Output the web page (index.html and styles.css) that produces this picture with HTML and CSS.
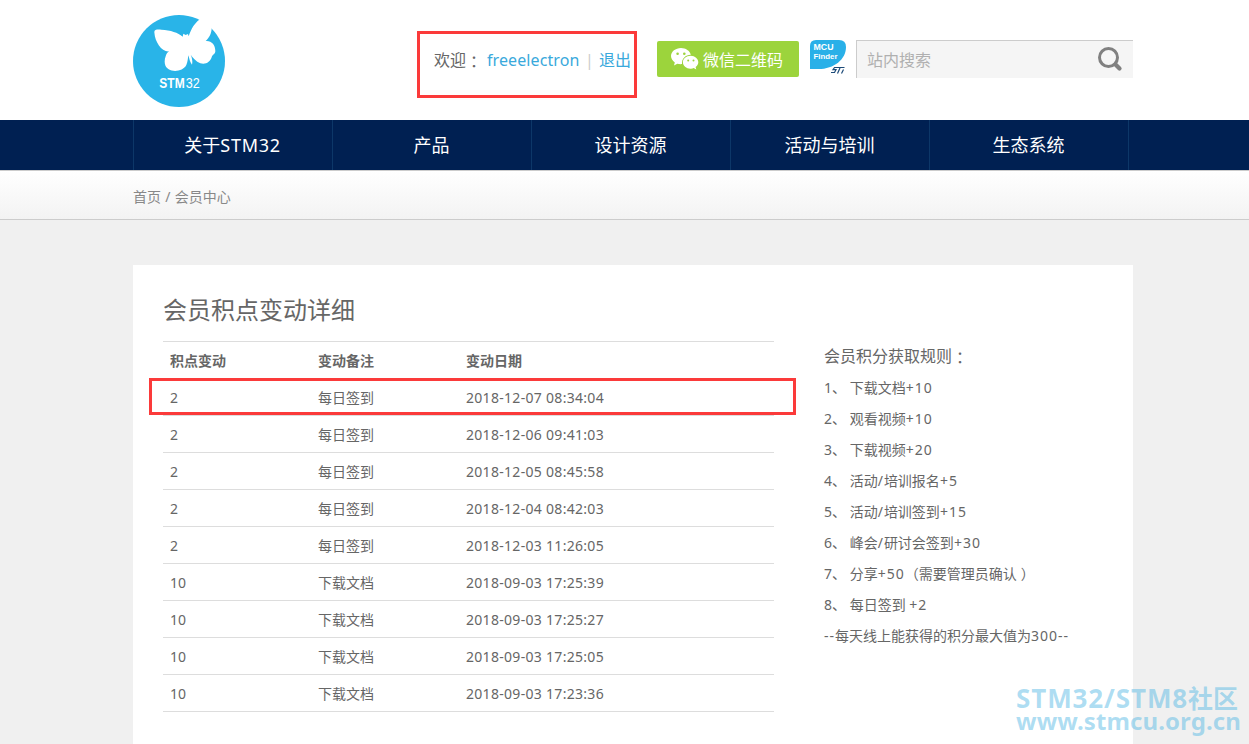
FILE: index.html
```html
<!DOCTYPE html>
<html lang="zh-CN">
<head>
    <meta charset="UTF-8">
    <title>会员中心</title>
    <link rel="stylesheet" href="styles.css">
</head>
<body>
    <header class="wrap header">
        <svg class="logo" viewBox="39 30 276 276">
            <circle cx="177" cy="168" r="138" fill="#29b4e8"/>
            <path fill="#fff" d="M103 82C102 74 110 73 124 74C152 76 174 82 188 95L190 86L197 90L204 87L206 94C214 70 224 54 238 44L262 20L290 62L275 68C275 84 268 98 257 108C274 106 286 119 286 138C286 147 279 148 276 154C271 172 256 180 241 175C228 170 219 158 212 149C217 160 218 170 216 179C210 172 207 161 206 151C203 159 204 169 199 180C190 198 162 202 146 193C132 184 132 166 137 154C139 146 143 141 148 139C126 142 105 113 103 82Z"/>
            <text class="logo-bold" x="118" y="249" textLength="76" lengthAdjust="spacingAndGlyphs">STM</text>
            <text class="logo-thin" x="197" y="249" textLength="42" lengthAdjust="spacingAndGlyphs">32</text>
        </svg>
        <div class="welcome">
            <span class="hello">欢迎<span class="mid" lang="zh-TW">：</span></span>
            <a href="#" class="user">freeelectron</a>
            <span class="bar">|</span>
            <a href="#">退出</a>
        </div>
        <a href="#" class="wechat">
            <svg width="28" height="22" viewBox="0 0 28 22">
                <path fill="#fff" d="M10 0C4.500 0 0 3.600 0 8.100C0 10.700 1.500 12.900 3.800 14.400L3 17.400L6.300 15.700C7.800 16.100 9.500 16.300 11 16.100C10.600 10.500 14.500 6.900 19.800 6.700C18.900 2.800 14.700 0 10 0Z"/>
                <path fill="#fff" d="M19.700 7.800C15 7.800 11.900 10.900 11.900 14.300C11.900 18 15.600 21 20 20.700C21 20.600 21.900 20.400 22.700 20.100L25.300 21.400L24.600 19C26.400 17.700 27.300 16.200 27.300 14.300C27.300 10.900 23.900 7.800 19.700 7.800Z"/>
                <g fill="#9cd43c">
                    <circle cx="6.600" cy="5.800" r="1.300"/>
                    <circle cx="13.300" cy="5.800" r="1.300"/>
                    <circle cx="17.200" cy="12.500" r="1"/>
                    <circle cx="22.500" cy="12.500" r="1"/>
                </g>
            </svg>
            <span>微信二维码</span>
        </a>
        <svg class="mcu" width="36" height="35" viewBox="0 0 36 35">
            <path fill="#29b0e8" d="M6 0H29Q36 0 36 7C36 20 23 30 6 29H0V6Q0 0 6 0Z"/>
            <text x="3.500" y="10" font-size="8.500" textLength="20" lengthAdjust="spacingAndGlyphs">MCU</text>
            <text x="3.500" y="19" font-size="7.500" textLength="24" lengthAdjust="spacingAndGlyphs">Finder</text>
            <path fill="none" stroke="#1c4a78" stroke-width="1.200" d="M34.500 27.500H24.500L23 29.700H26L24.500 32.500H21M30 28L27.500 33.500M33.500 29.500L31.500 33.500"/>
        </svg>
        <div class="search">
            <span>站内搜索</span>
            <svg width="26" height="26" viewBox="0 0 26 26" fill="none" stroke="#808080">
                <circle cx="11.500" cy="11.500" r="9" stroke-width="3"/>
                <path d="M18.500 18.500L22.500 22.500" stroke-width="4.200" stroke-linecap="round"/>
            </svg>
        </div>
    </header>

    <nav class="nav">
        <ul class="wrap">
            <li>关于<span class="latin">STM32</span></li>
            <li>产品</li>
            <li>设计资源</li>
            <li>活动与培训</li>
            <li>生态系统</li>
        </ul>
    </nav>

    <div class="crumb">
        <div class="wrap">首页 / 会员中心</div>
    </div>

    <main class="wrap panel">
        <h1>会员积点变动详细</h1>
        <div class="columns">
            <table>
                <tr><th>积点变动</th><th>变动备注</th><th>变动日期</th></tr>
                <tr><td class="marked">2</td><td>每日签到</td><td class="date">2018-12-07 08:34:04</td></tr>
                <tr><td>2</td><td>每日签到</td><td class="date">2018-12-06 09:41:03</td></tr>
                <tr><td>2</td><td>每日签到</td><td class="date">2018-12-05 08:45:58</td></tr>
                <tr><td>2</td><td>每日签到</td><td class="date">2018-12-04 08:42:03</td></tr>
                <tr><td>2</td><td>每日签到</td><td class="date">2018-12-03 11:26:05</td></tr>
                <tr><td>10</td><td>下载文档</td><td class="date">2018-09-03 17:25:39</td></tr>
                <tr><td>10</td><td>下载文档</td><td class="date">2018-09-03 17:25:27</td></tr>
                <tr><td>10</td><td>下载文档</td><td class="date">2018-09-03 17:25:05</td></tr>
                <tr><td>10</td><td>下载文档</td><td class="date">2018-09-03 17:23:36</td></tr>
            </table>
            <div class="rules">
                <h2>会员积分获取规则<span class="mid" lang="zh-TW">：</span></h2>
                <p>1、 下载文档<span class="num">+10</span></p>
                <p>2、 观看视频<span class="num">+10</span></p>
                <p>3、 下载视频<span class="num">+20</span></p>
                <p>4、 活动<span class="num">/</span>培训报名<span class="num">+5</span></p>
                <p>5、 活动<span class="num">/</span>培训签到<span class="num">+15</span></p>
                <p>6、 峰会<span class="num">/</span>研讨会签到<span class="num">+30</span></p>
                <p>7、 分享<span class="num">+50</span>（需要管理员确认<span class="close">）</span></p>
                <p>8、 每日签到 <span class="num">+2</span></p>
                <p><span class="num">--</span>每天线上能获得的积分最大值为<span class="num">300--</span></p>
            </div>
        </div>
    </main>

    <div class="watermark">
        <div class="mark-name"><span>STM32/STM8</span>社区</div>
        <div class="mark-url">www.stmcu.org.cn</div>
    </div>
</body>
</html>
```
FILE: styles.css
```css
* {
    box-sizing: border-box;
}

body {
    margin: 0;
    height: 744px;
    overflow: hidden;
    position: relative;
    background: #f0f0f0;
    color: #666;
    font-family: "Noto Sans", "Noto Sans CJK SC", sans-serif;
    font-size: 14px;
}

a {
    color: #39a9dc;
    text-decoration: none;
}

.wrap {
    width: 1000px;
    margin: 0 0 0 133px;
}

/* fullwidth colon centred in its box */
.mid {
    font-family: "Noto Sans CJK TC", sans-serif;
    line-height: 1;
    vertical-align: -2px;
}

/* header */
body::before {
    content: "";
    position: absolute;
    z-index: -1;
    top: 0;
    left: 0;
    right: 0;
    height: 120px;
    background: #fff;
}

.header {
    display: flex;
    align-items: flex-start;
    height: 120px;
}

.logo {
    width: 92px;
    height: 92px;
    margin-top: 15px;
}

.logo text {
    fill: #fff;
    font-family: "Liberation Sans", sans-serif;
    font-size: 45px;
}

.logo .logo-bold {
    font-weight: bold;
}

.welcome {
    display: flex;
    width: 220px;
    height: 67px;
    margin: 31px 0 0 192px;
    padding-left: 14px;
    border: 3px solid #fb3a3a;
    font-size: 16px;
    line-height: 52px;
    white-space: nowrap;
}

.hello {
    width: 53px;
}

.user {
    width: 93px;
    letter-spacing: 0.1px;
}

.bar {
    width: 19px;
    text-align: center;
    color: #ccc;
}

.wechat {
    display: flex;
    align-items: center;
    gap: 4px;
    width: 142px;
    height: 36px;
    margin: 41px 0 0 20px;
    padding: 0 0 1px 14px;
    border-radius: 2px;
    background: #9cd43c;
    color: #fff;
    font-size: 16px;
}

.mcu {
    margin: 40px 0 0 11px;
}

.mcu text {
    fill: #fff;
    font-family: "Liberation Sans", sans-serif;
    font-weight: bold;
}

.search {
    display: flex;
    align-items: center;
    justify-content: space-between;
    width: 277px;
    height: 38px;
    margin: 40px 0 0 10px;
    padding: 0 10px 1px;
    border-top: 1px solid #ccc;
    border-left: 1px solid #ccc;
    background: #f5f5f5;
    color: #b0b0b0;
    font-size: 16px;
}

/* navigation */
.nav {
    height: 50px;
    background: #002052;
}

.nav ul {
    display: flex;
    padding: 0;
    list-style: none;
}

.nav li {
    width: 199px;
    height: 50px;
    padding-right: 1px;
    border-left: 1px solid #0d3768;
    color: #fff;
    font-size: 18px;
    line-height: 50px;
    text-align: center;
}

.nav li:last-child {
    width: 200px;
    border-right: 1px solid #0d3768;
}

.latin {
    letter-spacing: 0.7px;
}

.crumb {
    height: 50px;
    border-top: 1px solid #ccc;
    border-bottom: 1px solid #ccc;
    background: linear-gradient(#fff, #f3f3f3);
    color: #888;
    line-height: 52px;
    word-spacing: 0.6px;
}

/* content */
.panel {
    height: 479px;
    margin-top: 45px;
    padding: 25px 30px 0;
    background: #fff;
}

h1 {
    margin: 0 0 11px;
    font-size: 24px;
    font-weight: normal;
    line-height: 40px;
}

.columns {
    display: flex;
    gap: 50px;
}

table {
    width: 611px;
    border-collapse: separate;
    border-spacing: 0;
    border-top: 1px solid #ddd;
    table-layout: fixed;
    align-self: flex-start;
}

th,
td {
    height: 37px;
    padding: 2px 0 0 7px;
    border-bottom: 1px solid #ddd;
    text-align: left;
    line-height: 20px;
}

th:nth-child(-n+2) {
    width: 148px;
}

.date {
    letter-spacing: 0.3px;
}

.marked {
    position: relative;
}

/* red frame round the newest record */
.marked::after {
    content: "";
    position: absolute;
    box-sizing: border-box;
    top: -1px;
    left: -14px;
    width: 647px;
    height: 37px;
    border: 3px solid #fb3a3a;
}

.rules h2 {
    height: 31px;
    margin: 0;
    font-size: 16px;
    font-weight: normal;
    line-height: 31px;
}

.rules p {
    margin: 0;
    line-height: 31px;
}

.num {
    letter-spacing: 1px;
}

.close {
    margin-left: 4px;
}

.watermark {
    position: absolute;
    top: 685px;
    left: 1016px;
    color: rgba(84, 184, 228, 0.48);
    font-weight: bold;
    white-space: nowrap;
}

.mark-name {
    font-size: 25px;
    line-height: 26px;
}

.mark-name span {
    font-size: 26px;
    letter-spacing: 0.9px;
}

.mark-url {
    font-size: 24px;
    line-height: 20px;
    letter-spacing: 0.1px;
}
```
